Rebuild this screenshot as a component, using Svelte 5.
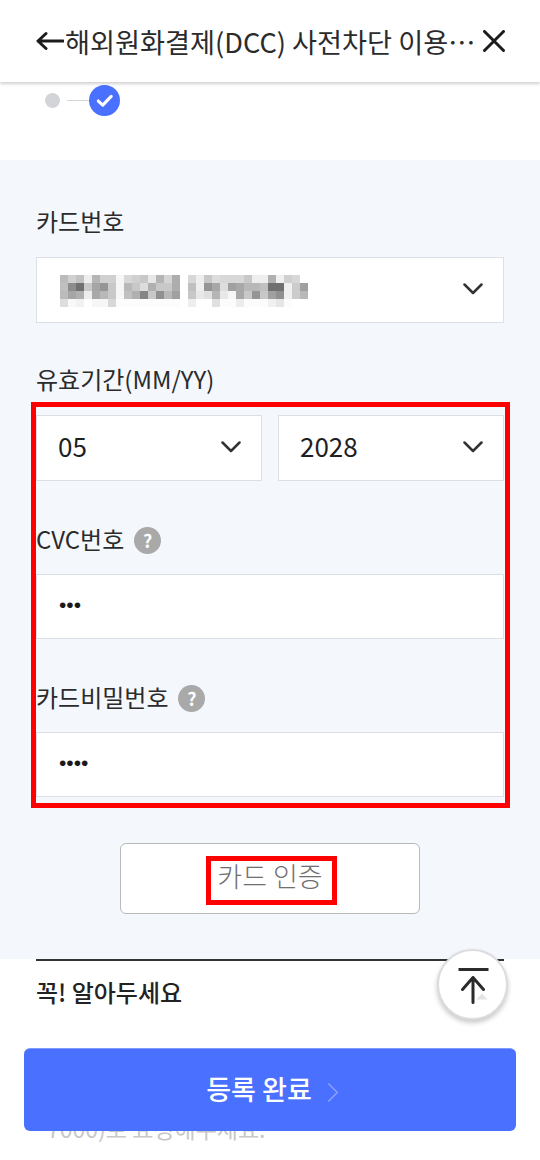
<script>
  const hex = (s) => s.split(',');
  const rows = [
    hex('bb,d0,c2,ee,b5,d0,d0,f6,d8,d0,c8,e8,b5,d5,ad,ff,d8,ee,c8,dd,d8,d8,d8,c8,ee,ee,b0,f0,d0,d8,ff'),
    hex('c0,8c,70,c8,a5,95,c8,f6,b8,c8,dd,b0,c8,c8,ad,ff,c0,ee,95,a8,dd,a0,a8,b8,b8,c0,70,70,f0,cc,a0'),
    hex('bb,a5,b0,ee,a8,b8,c8,f6,c0,b0,85,c8,90,b8,a0,ff,c8,e8,e0,b5,e8,f6,a8,c8,95,c8,a0,90,f0,cc,b8'),
    hex('dd,f8,f2,ff,f6,f6,d8,fc,fc,fc,fc,fc,fc,fc,fc,ff,ee,ff,ff,e0,fc,fc,ec,fc,fc,fc,f0,e6,fc,ff,ff')
  ];
</script>

<div class="page">
  <header class="bar">
    <svg class="back" viewBox="0 0 28 20" aria-hidden="true"><path d="M27 10H2M10 2.500 2 10l8 7.500" /></svg>
    <h1>해외원화결제(DCC) 사전차단 이용…</h1>
    <svg class="close" viewBox="0 0 22 22" aria-hidden="true"><path d="M1.500 1.500l19 19M20.500 1.500l-19 19" /></svg>
  </header>

  <div class="steps">
    <span class="dot"></span>
    <span class="link"></span>
    <span class="done">
      <svg viewBox="0 0 30 30" aria-hidden="true"><path d="M9 15.500l4.300 4L21.500 11" /></svg>
    </span>
  </div>

  <section class="form">
    <div class="label">카드번호</div>
    <div class="field select">
      <div class="mosaic" aria-hidden="true">
        {#each rows as row}
          {#each row as c}
            <i style="background:#{c}{c}{c}"></i>
          {/each}
        {/each}
      </div>
      <svg class="chev" viewBox="0 0 20 12" aria-hidden="true"><path d="M1.500 1.500 10 10l8.500-8.500" /></svg>
    </div>

    <div class="label gap">유효기간(MM/YY)</div>
    <div class="mark">
      <div class="pair">
        <div class="field select">
          <span>05</span>
          <svg class="chev" viewBox="0 0 20 12" aria-hidden="true"><path d="M1.500 1.500 10 10l8.500-8.500" /></svg>
        </div>
        <div class="field select">
          <span>2028</span>
          <svg class="chev" viewBox="0 0 20 12" aria-hidden="true"><path d="M1.500 1.500 10 10l8.500-8.500" /></svg>
        </div>
      </div>
      <div class="label gap2">CVC번호 <b class="help">?</b></div>
      <div class="field input"><span class="pw">•••</span></div>
      <div class="label gap2">카드비밀번호 <b class="help">?</b></div>
      <div class="field input"><span class="pw">••••</span></div>
    </div>

    <button class="auth" type="button"><span>카드 인증</span></button>
  </section>

  <section class="notice">
    <h2>꼭! 알아두세요</h2>
    <p>7000)로 요청해주세요.</p>
  </section>

  <button class="top" type="button" aria-label="맨 위로">
    <svg viewBox="0 0 40 44" aria-hidden="true">
      <path class="ghost" d="M23.500 36.500l5.500-6 5.500 6z" />
      <path class="line" d="M5.500 6.500h30" />
      <path class="arrow" d="M20 39.500V14.500M9.500 26.500 20 14.500l10.500 12" />
    </svg>
  </button>

  <button class="submit" type="button">
    <span>등록 완료</span>
    <svg viewBox="0 0 14 24" aria-hidden="true"><path d="M1.500 1.500 12 12 1.500 22.500" /></svg>
  </button>
</div>

<style>
  :global(body) {
    margin: 0;
    background: #fff;
  }
  .page {
    position: relative;
    width: 540px;
    height: 1160px;
    overflow: hidden;
    background: #fff;
    color: #2b2b2b;
    font-family: "Noto Sans CJK KR", "Noto Sans", sans-serif;
  }
  .bar {
    position: relative;
    z-index: 2;
    height: 82px;
    box-sizing: border-box;
    display: flex;
    align-items: center;
    padding: 0 35px 0 36px;
    background: #fff;
    box-shadow: 0 2px 3px rgba(0, 0, 0, 0.18);
  }
  .back {
    flex: none;
    width: 28px;
    height: 20px;
    fill: none;
    stroke: #1c1c1c;
    stroke-width: 3;
    stroke-linecap: round;
    stroke-linejoin: round;
  }
  h1 {
    flex: 1;
    min-width: 0;
    margin: 0 0 0 1px;
    font-size: 27.200px;
    font-weight: 400;
    line-height: 38px;
    white-space: nowrap;
    color: #2b2b2b;
  }
  .close {
    flex: none;
    width: 22px;
    height: 22px;
    fill: none;
    stroke: #1c1c1c;
    stroke-width: 3;
    stroke-linecap: round;
  }
  .steps {
    height: 78px;
    box-sizing: border-box;
    display: flex;
    align-items: flex-start;
    padding: 3px 0 0 45px;
  }
  .dot {
    width: 15px;
    height: 15px;
    margin-top: 8px;
    border-radius: 50%;
    background: #d2d4d8;
  }
  .link {
    width: 22px;
    height: 1px;
    margin: 15px 0 0 7px;
    background: #d5d5d5;
  }
  .done {
    width: 31px;
    height: 31px;
    border-radius: 50%;
    background: #4a70ff;
  }
  .done svg {
    display: block;
    width: 31px;
    height: 31px;
    fill: none;
    stroke: #fff;
    stroke-width: 3;
    stroke-linecap: round;
    stroke-linejoin: round;
  }
  .form {
    height: 799px;
    box-sizing: border-box;
    padding: 46px 36px 0;
    background: #f4f7fc;
  }
  .label {
    display: flex;
    align-items: center;
    gap: 10px;
    height: 30px;
    padding-bottom: 2px;
    font-size: 24px;
    line-height: 32px;
    margin-bottom: 19px;
    color: #2b2b2b;
  }
  .gap {
    margin-top: 41px;
    margin-bottom: 6px;
  }
  .gap2 {
    margin-top: 43px;
    margin-bottom: 18px;
  }
  .field {
    height: 66px;
    box-sizing: border-box;
    display: flex;
    align-items: center;
    justify-content: space-between;
    padding: 0 20px 0 21px;
    background: #fff;
    border: 1px solid #dcdfe3;
    font-size: 26px;
    line-height: 1;
    color: #1f1f1f;
  }
  .field span {
    margin-top: -4px;
  }
  .input {
    height: 65px;
  }
  .chev {
    flex: none;
    width: 20px;
    height: 12px;
    margin-top: -3px;
    fill: none;
    stroke: #333;
    stroke-width: 2.500;
    stroke-linecap: round;
    stroke-linejoin: round;
  }
  .mosaic {
    display: grid;
    grid-template-columns: repeat(31, 8px);
    grid-auto-rows: 8px;
    margin: 2px 0 0 2px;
  }
  .mosaic i {
    display: block;
  }
  .mark {
    margin: 0 -6px 0 -5px;
    padding: 8px 1px 6px 0;
    border: 5px solid #ff0000;
  }
  .pair {
    display: grid;
    grid-template-columns: 226px 226px;
    gap: 16px;
  }
  .help {
    display: inline-flex;
    align-items: center;
    justify-content: center;
    width: 27px;
    height: 27px;
    margin-top: 2px;
    border-radius: 50%;
    background: #a9a9a9;
    color: #fff;
    font-size: 18px;
    font-weight: 700;
    line-height: 1;
  }
  .pw {
    font-family: "Liberation Sans", sans-serif;
    font-size: 21px;
    color: #1a1a1a;
    margin-left: 1px;
  }
  .auth {
    display: flex;
    align-items: center;
    justify-content: center;
    width: 300px;
    height: 71px;
    margin: 35px auto 0;
    padding: 0;
    background: #fff;
    border: 1px solid #b9b9b9;
    border-radius: 6px;
    font: inherit;
    font-size: 27px;
    font-weight: 300;
    color: #6f6f6f;
  }
  .auth span {
    display: block;
    box-sizing: border-box;
    margin: 4px 0 0 3px;
    border: 5px solid #ff0000;
    padding: 0 9px 0 6px;
    height: 49px;
    line-height: 30px;
  }
  .notice {
    margin: 0 36px;
    border-top: 2px solid #333;
  }
  h2 {
    margin: 15px 0 0;
    font-size: 24px;
    font-weight: 500;
    line-height: 32px;
    color: #222;
  }
  .notice p {
    margin: 106px 0 0 11px;
    font-size: 23px;
    line-height: 28px;
    color: #c8c8c8;
  }
  .top {
    position: absolute;
    left: 437px;
    top: 949px;
    width: 71px;
    height: 71px;
    box-sizing: border-box;
    padding: 0;
    display: flex;
    align-items: center;
    justify-content: center;
    background: #fff;
    border: 2px solid #dcdcdc;
    border-radius: 50%;
    box-shadow: 0 3px 5px rgba(0, 0, 0, 0.22);
  }
  .top svg {
    width: 40px;
    height: 44px;
    fill: none;
  }
  .ghost {
    fill: #e4e4e4;
  }
  .line {
    stroke: #2b2b2b;
    stroke-width: 3;
  }
  .arrow {
    stroke: #2b2b2b;
    stroke-width: 3;
    stroke-linecap: round;
    stroke-linejoin: round;
  }
  .submit {
    position: absolute;
    left: 24px;
    top: 1048px;
    width: 492px;
    height: 83px;
    display: flex;
    align-items: center;
    justify-content: center;
    gap: 15px;
    padding: 0 0 4px 5px;
    background: #4a70ff;
    border: 0;
    border-top: 1px solid #7f9bff;
    border-radius: 6px;
    color: #fff;
    font: inherit;
    font-size: 27px;
    font-weight: 500;
  }
  .submit svg {
    width: 12px;
    height: 21px;
    margin-top: 8px;
    fill: none;
    stroke: #8fa7ff;
    stroke-width: 1.500;
  }
</style>
